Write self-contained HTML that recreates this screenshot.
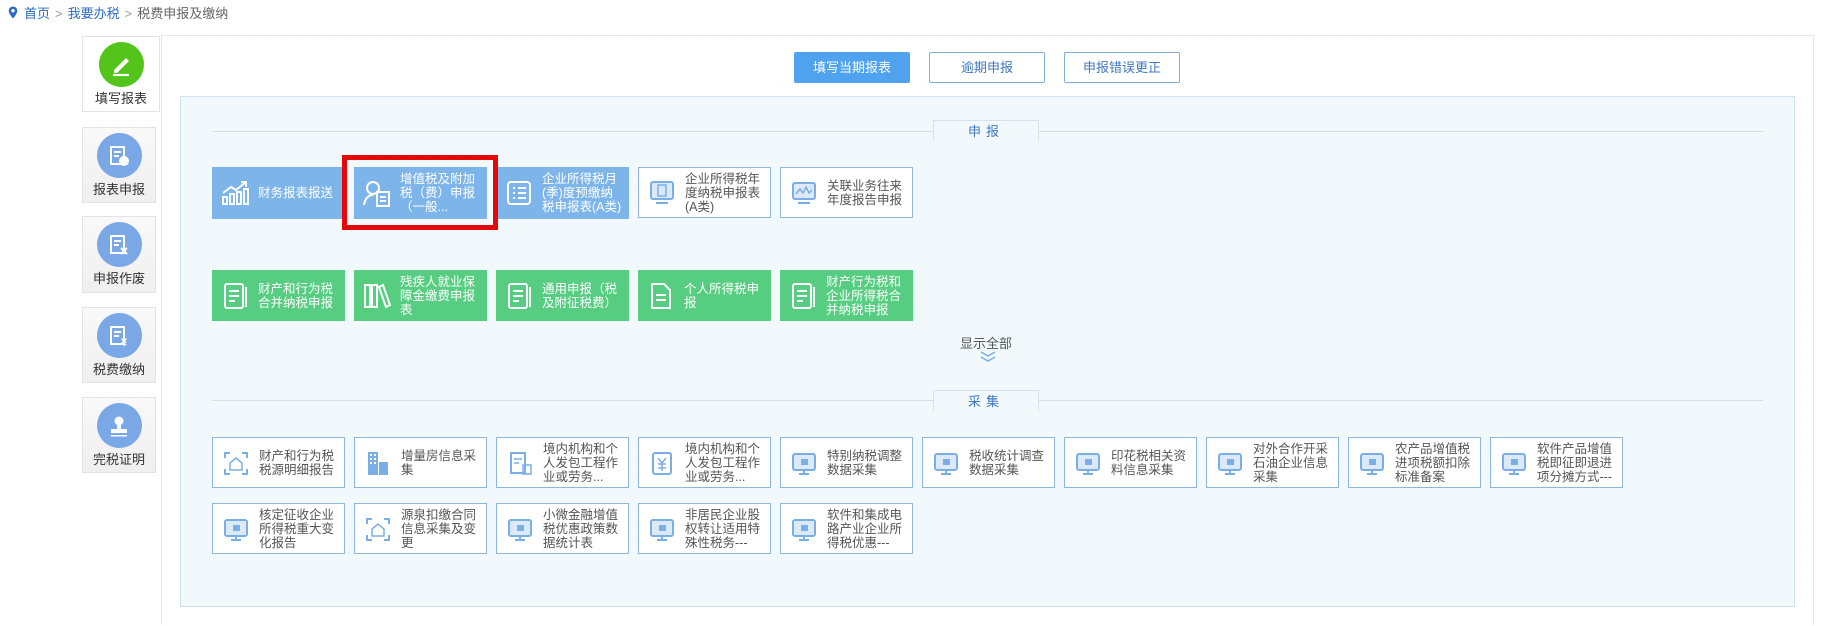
<!DOCTYPE html>
<html><head><meta charset="utf-8"><style>
*{margin:0;padding:0;box-sizing:border-box}
body{width:1846px;height:626px;overflow:hidden;background:#fff;font-family:"Liberation Sans","Noto Sans CJK SC",sans-serif;position:relative;
background-image:radial-gradient(#e3e3e3 0.7px,transparent 0.8px);background-size:16px 16px}
.abs{position:absolute}
.crumb{left:8px;top:6px;font-size:13px;color:#666;line-height:16px}
.crumb a{color:#2a6bc4;text-decoration:none}
.crumb .sep{color:#999;margin:0 5px}
.side{left:82px;width:74px;border:1px solid #e3e3e3;background:linear-gradient(#f9f9f9,#efefef);text-align:center;font-size:13px;color:#333;line-height:16px}
.side.on{background:#fff}
.side .c{width:45px;height:45px;border-radius:50%;background:#7aa8e6;margin:5px auto 4px;display:flex;align-items:center;justify-content:center}
.outer{left:161px;top:35px;width:1653px;height:590px;border-left:1px solid #e5e5e5;border-right:1px solid #e5e5e5;border-top:1px solid #e5e5e5}
.btn{top:52px;height:31px;width:116px;font-size:13px;text-align:center;line-height:29px;border:1px solid #7fb1e0;color:#3f78c0;background:#fff;border-radius:2px}
.btn.p{background:#4ea2ee;border-color:#4ea2ee;color:#fff}
.inner{left:180px;top:96px;width:1615px;height:511px;border:1px solid #cfe2ee;background:#f1f9fd;
background-image:radial-gradient(#dfe7ec 0.7px,transparent 0.8px);background-size:16px 16px}
.line{height:1px;background:#cfe0ea}
.lab{width:106px;height:21px;border:1px solid #d4e2ec;border-bottom:none;background:#f1f9fd;text-align:center;font-size:13px;color:#3f78c0;line-height:21px;letter-spacing:5px}
.t{width:133px;display:flex;align-items:center;font-size:12.5px;line-height:14px;padding-left:8px}
.t .i{width:30px;height:30px;flex:none;margin-right:8px;display:flex;align-items:center;justify-content:center}
.b{background:#7db5eb;color:#fff;height:52px}
.g{background:#56cd80;color:#fff;height:51px}
.w{background:#fff;border:1px solid #8fb6dc;color:#555;height:51px}
.red{left:342px;top:155px;width:156px;height:75px;border:5px solid #e4080b}
</style></head><body>
<div class="abs crumb"><svg width="10" height="13" viewBox="0 0 10 13" style="vertical-align:-1px;margin-right:6px"><path d="M5 0.5a4.3 4.3 0 0 0-4.3 4.3C0.7 8 5 12.5 5 12.5S9.3 8 9.3 4.8A4.3 4.3 0 0 0 5 .5z" fill="#2a6bc4"/><circle cx="5" cy="4.7" r="1.7" fill="#fff"/></svg><a>首页</a><span class="sep">&gt;</span><a>我要办税</a><span class="sep">&gt;</span>税费申报及缴纳</div>

<div class="abs outer"></div>
<div class="abs side on" style="top:36px;height:76px;width:78px"><div class="c" style="background:#52c41a;margin-top:5px"><svg width="26" height="26" viewBox="0 0 26 26"><path d="M6 18l12-12 3 3-12 12H6z" fill="#fff"/><path d="M5 23h16" stroke="#fff" stroke-width="2.2"/></svg></div>填写报表</div>
<div class="abs side" style="top:127px;height:76px"><div class="c"><svg width="24" height="24"><rect x="4" y="3" width="13" height="17" fill="none" stroke="#fff" stroke-width="2"/><path d="M7 8h7M7 12h5" stroke="#fff" stroke-width="2"/><circle cx="17" cy="17" r="5" fill="#fff"/></svg></div>报表申报</div>
<div class="abs side" style="top:216px;height:77px"><div class="c"><svg width="24" height="24"><rect x="4" y="3" width="13" height="17" fill="none" stroke="#fff" stroke-width="2"/><path d="M7 8h7M7 12h5M14 15l6 6M20 15l-6 6" stroke="#fff" stroke-width="2"/></svg></div>申报作废</div>
<div class="abs side" style="top:307px;height:76px"><div class="c"><svg width="24" height="24"><rect x="4" y="3" width="13" height="17" fill="none" stroke="#fff" stroke-width="2"/><path d="M7 8h7M7 12h5" stroke="#fff" stroke-width="2"/><text x="14" y="22" font-size="11" fill="#fff" font-weight="bold">¥</text></svg></div>税费缴纳</div>
<div class="abs side" style="top:397px;height:76px"><div class="c"><svg width="26" height="26"><circle cx="13" cy="8" r="4.5" fill="#fff"/><path d="M11 12h4v4h-4z" fill="#fff"/><rect x="5" y="16" width="16" height="4" fill="#fff"/><rect x="5" y="22" width="16" height="1.5" fill="#fff"/></svg></div>完税证明</div>

<div class="abs btn p" style="left:794px">填写当期报表</div>
<div class="abs btn" style="left:929px">逾期申报</div>
<div class="abs btn" style="left:1064px">申报错误更正</div>

<div class="abs inner"></div>
<div class="abs line" style="left:212px;top:131px;width:1551px"></div>
<div class="abs lab" style="left:933px;top:120px">申报</div>
<div class="abs line" style="left:212px;top:400px;width:1551px"></div>
<div class="abs lab" style="left:933px;top:390px">采集</div>

<div class="abs t b" style="left:212px;top:167px"><div class="i"><svg width="30" height="26"><path d="M3 24v-7h4v7zM10 24v-10h4v10zM17 24v-12h4v12zM24 24v-15h4v15z" fill="none" stroke="#fff" stroke-width="2"/><path d="M3 13l8-6 5 3 10-8M21 2h5v5" fill="none" stroke="#fff" stroke-width="2"/></svg></div>财务报表报送</div>
<div class="abs t b" style="left:354px;top:167px"><div class="i"><svg width="30" height="28"><circle cx="11" cy="9" r="6" fill="none" stroke="#fff" stroke-width="2"/><path d="M2 26c1-7 5-10 9-10" fill="none" stroke="#fff" stroke-width="2"/><rect x="15" y="13" width="12" height="14" fill="none" stroke="#fff" stroke-width="2"/><path d="M18 18h6M18 22h6" stroke="#fff" stroke-width="2"/></svg></div>增值税及附加<br>税（费）申报<br>（一般...</div>
<div class="abs t b" style="left:496px;top:167px"><div class="i"><svg width="28" height="28"><rect x="3" y="3" width="22" height="22" rx="3" fill="none" stroke="#fff" stroke-width="2"/><path d="M8 9h2M13 9h8M8 14h2M13 14h8M8 19h2M13 19h8" stroke="#fff" stroke-width="2"/></svg></div>企业所得税月<br>(季)度预缴纳<br>税申报表(A类)</div>
<div class="abs t w" style="left:638px;top:167px"><div class="i"><svg width="28" height="28"><rect x="3" y="3" width="22" height="17" rx="2" fill="#dbe9f8" stroke="#7aaee6" stroke-width="2"/><rect x="10" y="6" width="8" height="11" fill="none" stroke="#7aaee6" stroke-width="1.5"/><path d="M8 24h12" stroke="#7aaee6" stroke-width="2"/></svg></div>企业所得税年<br>度纳税申报表<br>(A类)</div>
<div class="abs t w" style="left:780px;top:167px"><div class="i"><svg width="28" height="28"><rect x="3" y="4" width="22" height="16" rx="2" fill="#dbe9f8" stroke="#7aaee6" stroke-width="2"/><path d="M6 15l4-5 3 4 3-6 3 6 3-3" fill="none" stroke="#7aaee6" stroke-width="1.5"/><path d="M8 24h12" stroke="#7aaee6" stroke-width="2"/></svg></div>关联业务往来<br>年度报告申报</div>

<div class="abs t g" style="left:212px;top:270px"><div class="i"><svg width="28" height="30"><rect x="4" y="3" width="18" height="24" rx="2" fill="none" stroke="#fff" stroke-width="2"/><path d="M8 10h10M8 15h10M8 20h6M25 6v20" stroke="#fff" stroke-width="2"/></svg></div>财产和行为税<br>合并纳税申报</div>
<div class="abs t g" style="left:354px;top:270px"><div class="i"><svg width="30" height="30"><path d="M3 4h5v22H3zM10 4h5v22h-5zM17 6l4-2 7 20-4 2z" fill="none" stroke="#fff" stroke-width="2"/></svg></div>残疾人就业保<br>障金缴费申报<br>表</div>
<div class="abs t g" style="left:496px;top:270px"><div class="i"><svg width="28" height="30"><rect x="4" y="3" width="18" height="24" rx="2" fill="none" stroke="#fff" stroke-width="2"/><path d="M8 10h10M8 15h10M8 20h6M25 6v20" stroke="#fff" stroke-width="2"/></svg></div>通用申报（税<br>及附征税费）</div>
<div class="abs t g" style="left:638px;top:270px"><div class="i"><svg width="28" height="30"><path d="M5 3h12l6 6v18H5z" fill="none" stroke="#fff" stroke-width="2"/><path d="M9 14h10M9 19h10" stroke="#fff" stroke-width="2"/></svg></div>个人所得税申<br>报</div>
<div class="abs t g" style="left:780px;top:270px"><div class="i"><svg width="28" height="30"><rect x="4" y="3" width="18" height="24" rx="2" fill="none" stroke="#fff" stroke-width="2"/><path d="M8 10h10M8 15h10M8 20h6M25 6v20" stroke="#fff" stroke-width="2"/></svg></div>财产行为税和<br>企业所得税合<br>并纳税申报</div>

<div class="abs" style="left:960px;top:333px;font-size:13px;color:#555">显示全部</div>
<svg class="abs" style="left:979px;top:350px" width="18" height="12"><path d="M2 2l7 4 7-4M2 7l7 4 7-4" fill="none" stroke="#7aaee6" stroke-width="1.5"/></svg>

<svg width="0" height="0" style="position:absolute"><defs>
<g id="mon"><rect x="3" y="5" width="22" height="16" rx="2" fill="#dbe9f8" stroke="#7aaee6" stroke-width="2"/><rect x="11" y="10" width="7" height="6" fill="#7aaee6"/><path d="M14 21v4M9 25h10" stroke="#7aaee6" stroke-width="2"/></g>
<g id="hs"><path d="M3 9V4h5M20 4h5v5M25 20v5h-5M8 25H3v-5" fill="none" stroke="#7aaee6" stroke-width="2"/><path d="M8 14l6-5 6 5v7H8z" fill="none" stroke="#7aaee6" stroke-width="1.5"/></g>
</defs></svg>
<div class="abs t w" style="left:212px;top:437px"><div class="i"><svg width="28" height="28"><use href="#hs"/></svg></div>财产和行为税<br>税源明细报告</div>
<div class="abs t w" style="left:354px;top:437px"><div class="i"><svg width="28" height="28"><path d="M4 3h10v23H4zM15 13h9v13h-9z" fill="#7aaee6"/><path d="M6 6h2M10 6h2M6 10h2M10 10h2M6 14h2M10 14h2" stroke="#fff" stroke-width="2"/></svg></div>增量房信息采<br>集</div>
<div class="abs t w" style="left:496px;top:437px"><div class="i"><svg width="28" height="28"><path d="M5 4h14v20H5z" fill="none" stroke="#7aaee6" stroke-width="2"/><path d="M8 10h8M8 14h5M17 16h8v9h-8z" stroke="#7aaee6" stroke-width="1.5" fill="none"/></svg></div>境内机构和个<br>人发包工程作<br>业或劳务...</div>
<div class="abs t w" style="left:638px;top:437px"><div class="i"><svg width="28" height="28"><rect x="5" y="4" width="18" height="21" rx="2" fill="none" stroke="#7aaee6" stroke-width="2"/><path d="M10 9l4 5 4-5M14 14v8M10 15h8M10 19h8" stroke="#7aaee6" stroke-width="1.5" fill="none"/></svg></div>境内机构和个<br>人发包工程作<br>业或劳务...</div>
<div class="abs t w" style="left:780px;top:437px"><div class="i"><svg width="28" height="28"><use href="#mon"/></svg></div>特别纳税调整<br>数据采集</div>
<div class="abs t w" style="left:922px;top:437px"><div class="i"><svg width="28" height="28"><use href="#mon"/></svg></div>税收统计调查<br>数据采集</div>
<div class="abs t w" style="left:1064px;top:437px"><div class="i"><svg width="28" height="28"><use href="#mon"/></svg></div>印花税相关资<br>料信息采集</div>
<div class="abs t w" style="left:1206px;top:437px"><div class="i"><svg width="28" height="28"><use href="#mon"/></svg></div>对外合作开采<br>石油企业信息<br>采集</div>
<div class="abs t w" style="left:1348px;top:437px"><div class="i"><svg width="28" height="28"><use href="#mon"/></svg></div>农产品增值税<br>进项税额扣除<br>标准备案</div>
<div class="abs t w" style="left:1490px;top:437px"><div class="i"><svg width="28" height="28"><use href="#mon"/></svg></div>软件产品增值<br>税即征即退进<br>项分摊方式---</div>

<div class="abs t w" style="left:212px;top:503px"><div class="i"><svg width="28" height="28"><use href="#mon"/></svg></div>核定征收企业<br>所得税重大变<br>化报告</div>
<div class="abs t w" style="left:354px;top:503px"><div class="i"><svg width="28" height="28"><use href="#hs"/></svg></div>源泉扣缴合同<br>信息采集及变<br>更</div>
<div class="abs t w" style="left:496px;top:503px"><div class="i"><svg width="28" height="28"><use href="#mon"/></svg></div>小微金融增值<br>税优惠政策数<br>据统计表</div>
<div class="abs t w" style="left:638px;top:503px"><div class="i"><svg width="28" height="28"><use href="#mon"/></svg></div>非居民企业股<br>权转让适用特<br>殊性税务---</div>
<div class="abs t w" style="left:780px;top:503px"><div class="i"><svg width="28" height="28"><use href="#mon"/></svg></div>软件和集成电<br>路产业企业所<br>得税优惠---</div>

<div class="abs red"></div>
</body></html>
